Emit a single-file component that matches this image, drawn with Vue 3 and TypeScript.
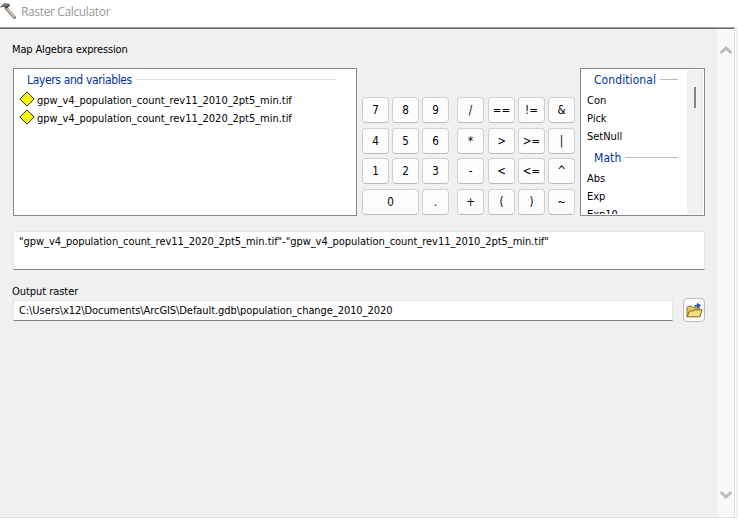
<script setup lang="ts">
import { ref } from 'vue'

interface Group {
  title: string
  items: string[]
}

const layers: string[] = [
  'gpw_v4_population_count_rev11_2010_2pt5_min.tif',
  'gpw_v4_population_count_rev11_2020_2pt5_min.tif',
]
const digits: string[] = ['7', '8', '9', '4', '5', '6', '1', '2', '3', '0', '.']
const operators: string[] = [
  '/', '==', '!=', '&',
  '*', '>', '>=', '|',
  '-', '<', '<=', '^',
  '+', '(', ')', '~',
]
const groups: Group[] = [
  { title: 'Conditional', items: ['Con', 'Pick', 'SetNull'] },
  { title: 'Math', items: ['Abs', 'Exp', 'Exp10'] },
]
const expression = ref(`"${layers[1]}"-"${layers[0]}"`)
const output = ref('C:\\Users\\x12\\Documents\\ArcGIS\\Default.gdb\\population_change_2010_2020')
</script>

<template>
  <div class="window">
    <header class="titlebar">
      <svg class="hammer" width="17" height="20" viewBox="0 0 17 20">
        <path d="M6 8 L14.5 17.3" stroke="#8b8177" stroke-width="3.2" stroke-linecap="round" />
        <path d="M6 7.6 L14.2 16.4" stroke="#d8cdbf" stroke-width="1.4" stroke-linecap="round" />
        <path d="M0 8 Q1.5 4 5 3.3 L9.5 4 L9.7 6 L6.6 8.8 L4.6 7 Q2.3 6.4 0 8Z" fill="#454b4e" />
        <path d="M2 5.7 Q4 4.2 7.5 5" stroke="#aeb5b8" fill="none" />
      </svg>
      <span class="title">Raster Calculator</span>
    </header>
    <div class="body">
      <main class="content">
        <div class="label">Map Algebra expression</div>
        <div class="calculator">
          <section class="list layers">
            <div class="heading"><span>Layers and variables</span><i></i></div>
            <div v-for="layer in layers" :key="layer" class="layer">
              <svg width="16" height="16" viewBox="0 0 16 16">
                <path d="M8 .9 15.1 8 8 15.1.9 8Z" fill="#ff0" stroke="#222" stroke-width="1" />
              </svg>
              <span>{{ layer }}</span>
            </div>
          </section>
          <div class="keys digits">
            <button v-for="key in digits" :key="key" :class="{ wide: key === '0' }">{{ key }}</button>
          </div>
          <div class="keys operators">
            <button v-for="key in operators" :key="key">{{ key }}</button>
          </div>
          <section class="list functions">
            <div class="tree">
              <template v-for="group in groups" :key="group.title">
                <div class="heading"><span>{{ group.title }}</span><i></i></div>
                <div v-for="item in group.items" :key="item" class="item">{{ item }}</div>
              </template>
            </div>
            <div class="track"><div class="thumb"></div></div>
          </section>
        </div>
        <div class="field expression">{{ expression }}</div>
        <div class="label out">Output raster</div>
        <div class="outrow">
          <div class="field path">{{ output }}</div>
          <button class="browse">
            <svg width="17" height="16" viewBox="0 0 17 16">
              <path d="M1 14.5V5.3L2 4.3H6L7.3 5.8H13.5V9" fill="#e8c862" stroke="#8e7526" />
              <path d="M1 14.8 3.8 9H7.5L8.5 7.8H16L14 14.8Z" fill="#f5dc83" stroke="#806719" />
              <path d="M8.2 5.2Q8.2 2.8 11 2.8V.8L15.2 3.6 11 6.4V4.6Q9.3 4.4 8.2 5.2Z" fill="#16589b" />
            </svg>
          </button>
        </div>
      </main>
      <aside class="scroll">
        <svg width="12" height="10" viewBox="0 0 12 10"><path d="M.7 8 6 3 11.3 8" /></svg>
        <svg width="12" height="10" viewBox="0 0 12 10"><path d="M.7 2 6 7 11.3 2" /></svg>
      </aside>
    </div>
  </div>
</template>

<style>
body {
  margin: 0;
  background: #f0f0f0;
}
</style>

<style scoped>
.window {
  width: 738px;
  height: 519px;
  overflow: hidden;
  box-sizing: border-box;
  background: linear-gradient(90deg, #fff 736px, #f0f0f0 736px);
  color: #000;
  font: 11px/14px "DejaVu Sans Condensed", "DejaVu Sans", sans-serif;
  font-stretch: condensed;
  letter-spacing: -0.03px;
  white-space: nowrap;
}
.window * { box-sizing: border-box; }
.titlebar {
  height: 27px;
  background: #fff;
  display: flex;
}
.hammer { display: block; }
.title {
  margin-left: 4px;
  font: 12px/24px "Open Sans", sans-serif;
  letter-spacing: -0.36px;
  color: #999;
}
.body {
  display: flex;
  width: 735px;
  height: 491px;
  background: #f0f0f0;
  border-top: 1px solid #a0a0a0;
  border-right: 1px solid #dedede;
  border-bottom: 1px solid #dedede;
}
.content {
  width: 717px;
  height: 489px;
  padding: 15px 12px 0 13px;
  border-top: 1px solid #696969;
}
.label { height: 14px; margin: -1px 0 0 -1px; letter-spacing: -0.15px; }
.calculator { display: flex; height: 148px; margin-top: 11px; }
.list {
  border: 1px solid #828790;
  background: #fff;
  height: 148px;
}
.layers { width: 344px; padding-top: 3px; }
.heading {
  display: flex;
  align-items: center;
  height: 16px;
  color: #003399;
  font-size: 12px;
  line-height: 16px;
  letter-spacing: 0.08px;
}
.heading i { flex: 1; height: 1px; margin: -1px 0 0 4px; background: #b0bddc; }
.layers .heading { padding: 0 20px 0 13px; margin-bottom: 2px; letter-spacing: -0.36px; }
.layers .heading i { background: #d9ddec; }
.layer { display: flex; align-items: center; height: 18px; padding-left: 5px; }
.layer span { margin: 3px 0 0 2px; }
.keys {
  display: grid;
  grid-template-rows: 26px 26px 26px 26px;
  row-gap: 4.67px;
  margin-top: 29px;
  height: 118px;
}
.digits { grid-template-columns: repeat(3, 27px); column-gap: 3px; margin-left: 5px; }
.operators { grid-template-columns: 28px repeat(3, 27px); column-gap: 3px; margin: 29px 5px 0 8px; }
.operators button { width: 27px; }
button {
  margin: 0;
  padding: 0;
  border: 1px solid #d0d0d0;
  border-bottom-color: #bcbcbc;
  border-radius: 4px;
  background: #fdfdfd;
  color: #000;
  font: inherit;
  font-size: 11.5px;
  letter-spacing: 0;
}
.wide { grid-column: span 2; }
.functions { width: 125px; display: flex; padding: 1px; overflow: hidden; }
.tree { width: 105px; height: 144px; overflow: hidden; }
.functions .heading { padding: 0 9px 0 12px; height: 20px; }
.functions .heading:not(:first-child) { height: 24px; padding-top: 3px; }
.item { height: 18px; padding-left: 5px; line-height: 21px; }
.track { width: 16px; height: 144px; background: #f0f0f0; padding: 17px 0 0 7px; }
.thumb { width: 2px; height: 21px; background: #858585; }
.field { background: #fff; border: 1px solid #e5e5e5; border-bottom-color: #858585; }
.expression { height: 39px; margin-top: 15px; padding: 3px 5px; letter-spacing: -0.045px; }
.out { margin-top: 15px; height: 13px; letter-spacing: -0.05px; }
.outrow { display: flex; justify-content: space-between; align-items: center; }
.path { width: 660px; height: 21px; padding: 3px 5px; letter-spacing: -0.07px; }
.browse { width: 22px; height: 24px; display: grid; place-items: center; border-color: #bdbdbd; }
.scroll {
  width: 17px;
  height: 489px;
  padding: 16px 0 17px 3px;
  border-top: 1px solid #696969;
  display: flex;
  flex-direction: column;
  justify-content: space-between;
  background: #f9f9f9;
}
.scroll path { fill: none; stroke: #bcbcbc; stroke-width: 3; }
</style>
